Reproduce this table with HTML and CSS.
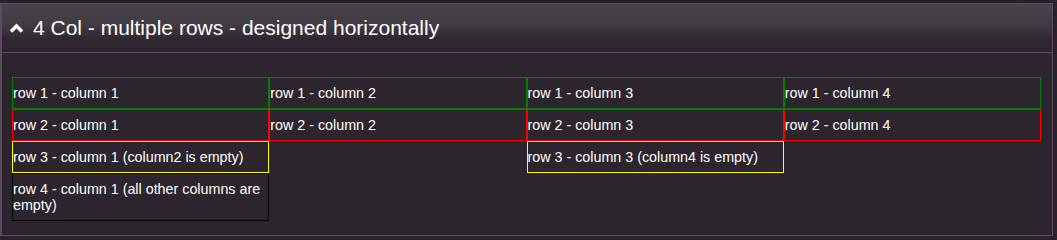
FILE: index.html
```html
<!DOCTYPE html>
<html>
<head>
<meta charset="utf-8">
<link rel="stylesheet" href="styles.css">
</head>
<body>
<div class="panel">
  <div class="panel-header">
    <svg class="chev" width="15" height="10" viewBox="0 0 15 10"><path d="M2 8.5 L7.5 3 L13 8.5" fill="none" stroke="#fff" stroke-width="3.4"/></svg>
    <span class="title">4 Col - multiple rows - designed horizontally</span>
  </div>
  <div class="panel-body">
    <div class="grid">
      <div class="cell g">row 1 - column 1</div>
      <div class="cell g">row 1 - column 2</div>
      <div class="cell g">row 1 - column 3</div>
      <div class="cell g">row 1 - column 4</div>
      <div class="cell r">row 2 - column 1</div>
      <div class="cell r">row 2 - column 2</div>
      <div class="cell r">row 2 - column 3</div>
      <div class="cell r">row 2 - column 4</div>
      <div class="cell y">row 3 - column 1 (column2 is empty)</div>
      <div class="cell empty"></div>
      <div class="cell y">row 3 - column 3 (column4 is empty)</div>
      <div class="cell empty"></div>
      <div class="cell k">row 4 - column 1 (all other columns are empty)</div>
    </div>
  </div>
</div>
</body>
</html>
```
FILE: styles.css
```css
html, body {
  margin: 0;
  padding: 0;
  background: #2a222a;
}
body {
  font-family: "Liberation Sans", Arial, sans-serif;
  color: #fff;
  width: 1057px;
  height: 240px;
  overflow: hidden;
}
.panel {
  margin-top: 3px;
  width: 1050px;
  border: 1px solid #5e4a5e;
  border-left-width: 2px;
  background: #2d252d;
}
.panel-header {
  height: 48px;
  display: flex;
  align-items: center;
  padding-left: 7px;
  background: linear-gradient(to bottom, #49434b 0%, #403a42 45%, #2f272f 75%, #2d252d 100%);
  border-bottom: 1px solid #5e4a5e;
}
.chev {
  display: block;
  margin-right: 9px;
  margin-top: 0;
}
.title {
  font-size: 21px;
  line-height: 24px;
}
.panel-body {
  padding: 24px 11px 14px 10px;
}
.grid {
  display: grid;
  grid-template-columns: repeat(4, 1fr);
}
.cell {
  font-size: 14.3px;
  line-height: 16px;
  padding: 7px 1px 7px 0;
  border: 1px solid transparent;
  min-height: 16px;
}
.g { border-color: #008000; }
.r { border-color: #ff0000; }
.y { border-color: #ffff00; }
.k { border-color: #000000; }
```
